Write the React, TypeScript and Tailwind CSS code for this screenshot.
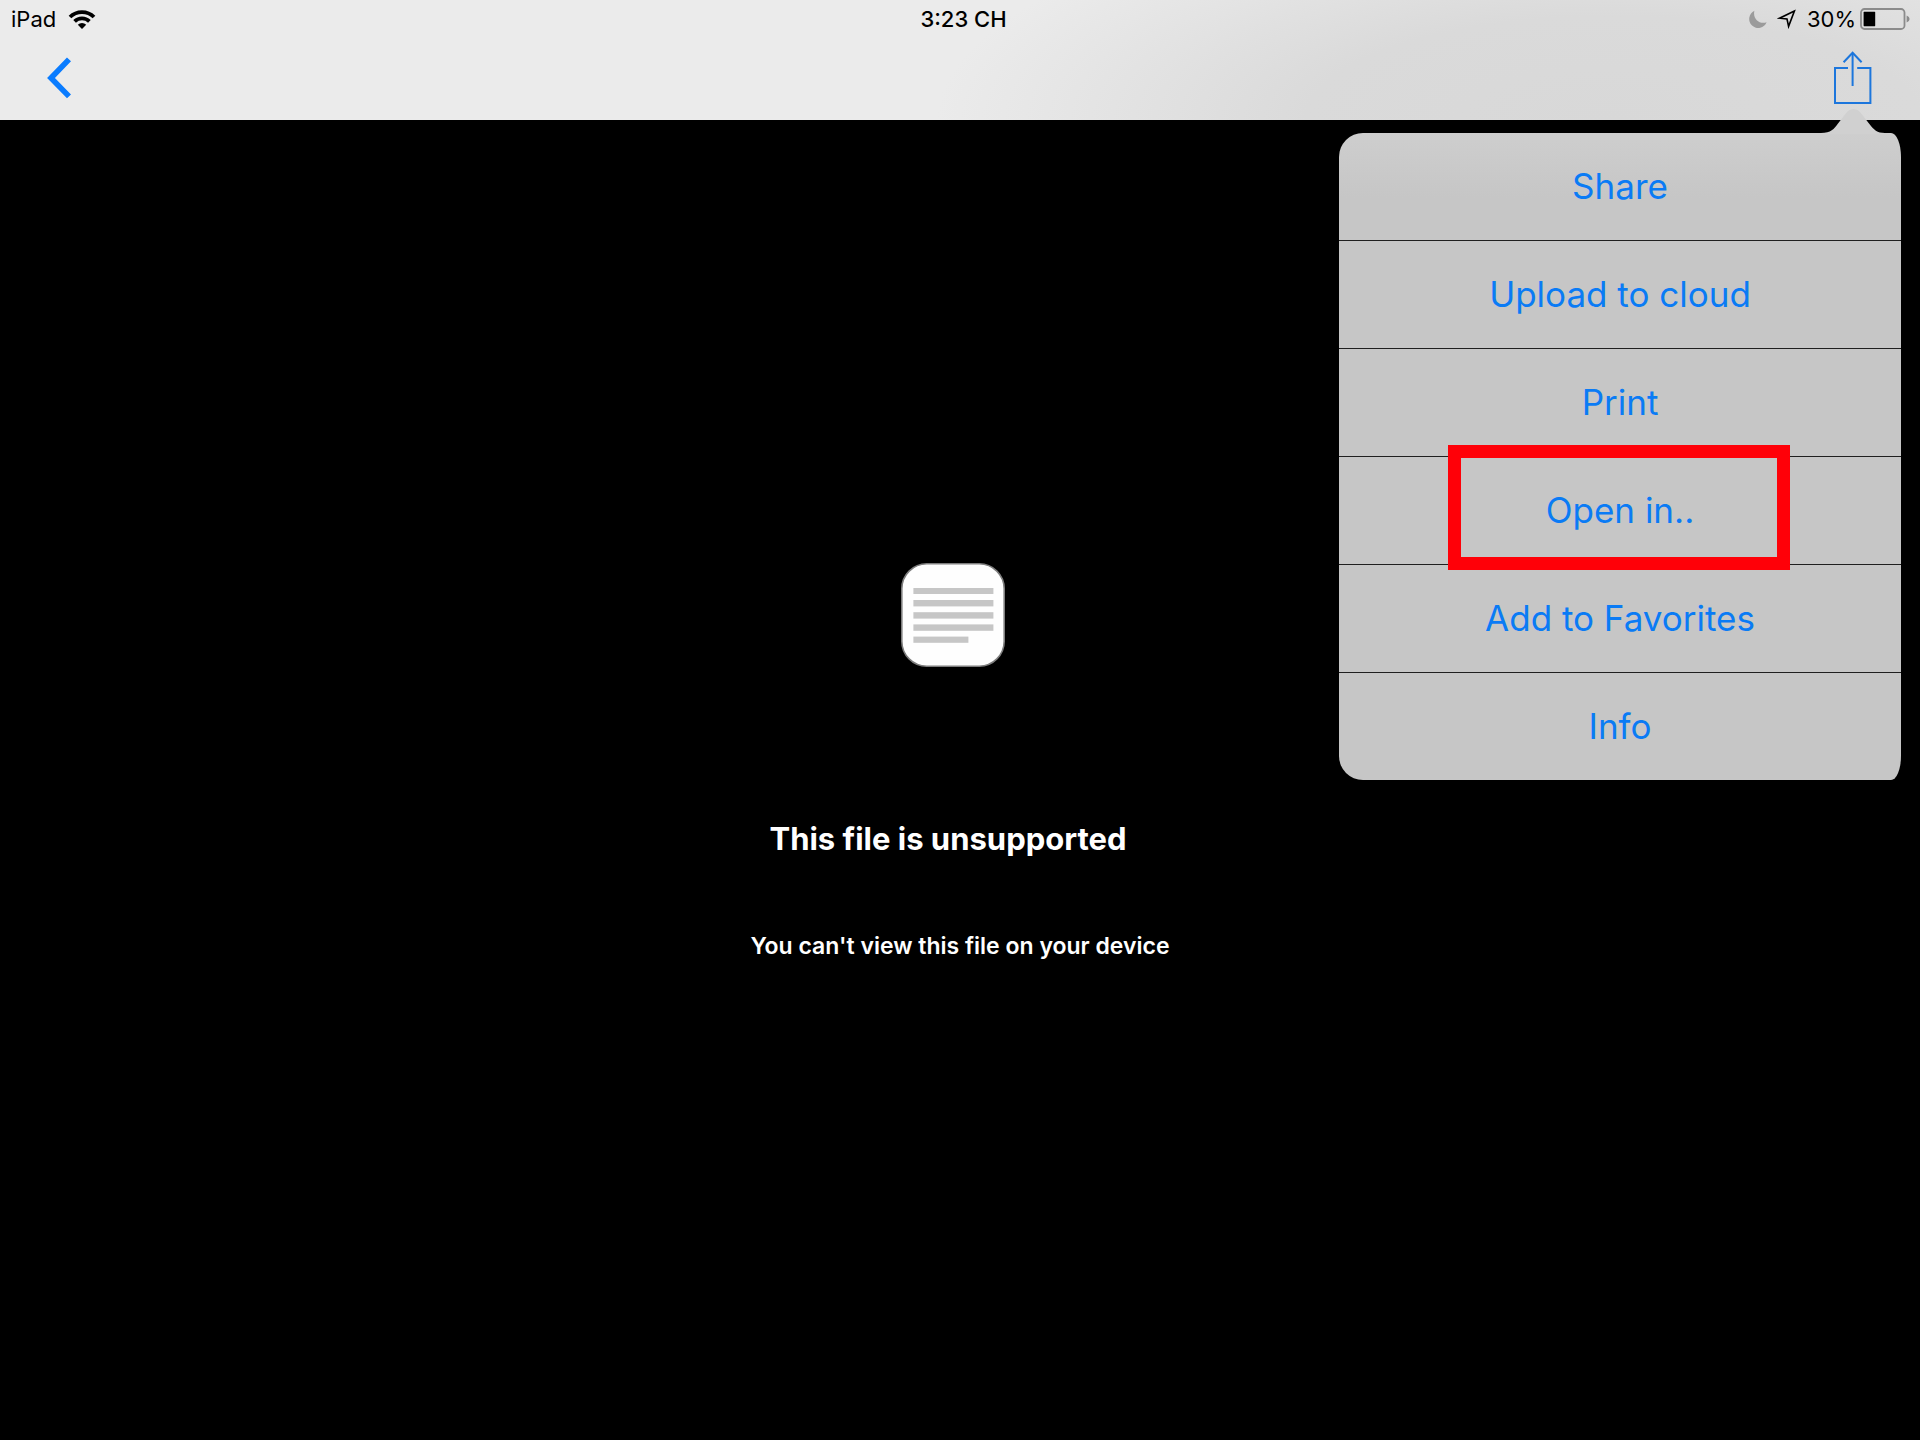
type MenuItem = {
  title: string
  highlighted?: boolean
}

const MENU_ITEMS: MenuItem[] = [
  { title: "Share" },
  { title: "Upload to cloud" },
  { title: "Print" },
  { title: "Open in..", highlighted: true },
  { title: "Add to Favorites" },
  { title: "Info" },
]

const WifiIcon = () => (
  <svg width="28" height="20" viewBox="0 0 28 20" fill="none" stroke="#000" strokeWidth="3.8">
    <path d="M2 8 A17 17 0 0 1 26 8" />
    <path d="M6.6 12.4 A10.6 10.6 0 0 1 21.4 12.4" />
    <path d="M14 20 L9.8 15.8 A6 6 0 0 1 18.2 15.8 Z" fill="#000" stroke="none" />
  </svg>
)

const MoonIcon = () => (
  <svg width="18" height="18" viewBox="0 0 18 18" fill="#9b9b9b">
    <path d="M5.4 0.8 A9 9 0 1 0 17.6 12.2 C10.5 14.8 3.4 8.6 5.4 0.8 Z" />
  </svg>
)

const LocationIcon = () => (
  <svg width="20" height="20" viewBox="0 0 20 20" fill="none" stroke="#000" strokeWidth="1.6">
    <path d="M17.4 2 L2.6 9.2 L10 10 L11.6 17.4 Z" />
  </svg>
)

const BatteryIcon = () => (
  <svg width="50" height="22" viewBox="0 0 50 22">
    <rect x="1" y="1" width="43.5" height="20" rx="3.5" fill="none" stroke="#8b8b8b" strokeWidth="1.8" />
    <rect x="3.6" y="3.8" width="11.6" height="14.4" rx="0.6" fill="#000" />
    <path d="M46.6 7.4 Q49.6 8.6 49.6 11 Q49.6 13.4 46.6 14.6 Z" fill="#8b8b8b" />
  </svg>
)

const BackIcon = () => (
  <svg width="26" height="42" viewBox="0 0 26 42" fill="none" stroke="#0a7cff" strokeWidth="5.6">
    <path d="M23 2.4 L5 21 L23 39.4" />
  </svg>
)

const ShareIcon = () => (
  <svg width="40" height="54" viewBox="0 0 40 54" fill="none" stroke="#1c76dc" strokeWidth="2">
    <path d="M16 17 H3 V52 H38.4 V17 H25.2" />
    <path d="M20.6 35 V2.2" />
    <path d="M11.6 11.2 L20.6 1.8 L29.6 11.2" />
  </svg>
)

const DocumentIcon = () => (
  <svg width="104" height="104" viewBox="0 0 104 104">
    <rect x="0.8" y="0.8" width="102.4" height="102.4" rx="25" fill="#fefefe" stroke="#7d7d7d" strokeWidth="1.6" />
    <g fill="#c6c6c6">
      <rect x="12.4" y="25" width="80" height="6" />
      <rect x="12.4" y="37" width="80" height="6.4" />
      <rect x="12.4" y="49.2" width="80" height="6.4" />
      <rect x="12.4" y="61.4" width="80" height="6.4" />
      <rect x="12.4" y="73.6" width="55" height="6.2" />
    </g>
  </svg>
)

const StatusBar = () => (
  <div className="grid h-[38px] grid-cols-3 items-center pr-2.5 pl-[11px] text-[22px] leading-6 text-black">
    <div className="flex items-center gap-3">
      <span>iPad</span>
      <WifiIcon />
    </div>
    <time className="pl-1.5 text-center font-medium">3:23 CH</time>
    <div className="flex items-center justify-end">
      <MoonIcon />
      <span className="ml-2.5">
        <LocationIcon />
      </span>
      <span className="mr-1 ml-2.5">30%</span>
      <BatteryIcon />
    </div>
  </div>
)

const NavBar = () => (
  <nav className="flex h-[82px] items-center justify-between pr-12 pb-0.5 pl-[46px]">
    <button type="button" aria-label="Back">
      <BackIcon />
    </button>
    <button type="button" aria-label="Actions" aria-haspopup="menu" aria-expanded="true">
      <ShareIcon />
    </button>
  </nav>
)

const ActionMenu = () => (
  <div className="absolute top-[133px] right-[19px] w-[562px]">
    <svg
      className="absolute -top-6 right-4"
      width="64"
      height="25"
      viewBox="0 0 64 25"
      fill="#d0d0d0"
    >
      <path d="M0 25 V24 C10 24 13 20 17 14.5 L26 3 Q29 0 32.5 0 Q36 0 39 3 L48 14.5 C53 21 56 24 64 24 V25 Z" />
    </svg>
    <ul className="divide-y divide-[#1f1f1f] overflow-hidden rounded-[24px_10px_10px_24px/24px] bg-[#c6c6c6] bg-linear-to-b from-[#cecece] to-[#c6c6c6] to-10%">
      {MENU_ITEMS.map(({ title }) => (
        <li key={title}>
          <button type="button" className="h-[107px] w-full text-center text-[35px] text-[#0a7bf5]">
            {title}
          </button>
        </li>
      ))}
    </ul>
    {/* marker around the highlighted entry */}
    <div className="pointer-events-none absolute inset-0 grid grid-rows-6 justify-items-center">
      {MENU_ITEMS.map(({ title, highlighted }) => (
        <div key={title} className="w-[344px]">
          {highlighted && <div className="-mt-3 h-[125px] w-[342px] border-[13px] border-[#ff0008]" />}
        </div>
      ))}
    </div>
  </div>
)

const App: React.FC = () => {
  return (
    <div className="relative min-h-screen bg-black font-['Inter','Liberation_Sans',sans-serif]">
      <header className="bg-[radial-gradient(40%_260px_at_84%_100%,#d8d8d8_0%,#dadada_40%,#e4e4e4_68%,#ebebeb_88%)]">
        <StatusBar />
        <NavBar />
      </header>
      <main className="flex flex-col items-center pt-[443px] text-center text-white">
        <div className="pr-3.5">
          <DocumentIcon />
        </div>
        <h1 className="mt-[152px] pr-6 text-[31px] leading-10 font-bold">
          This file is unsupported
        </h1>
        <p className="mt-[71px] text-[23px] leading-8 font-semibold">
          You can't view this file on your device
        </p>
      </main>
      <ActionMenu />
    </div>
  )
}

export default App
